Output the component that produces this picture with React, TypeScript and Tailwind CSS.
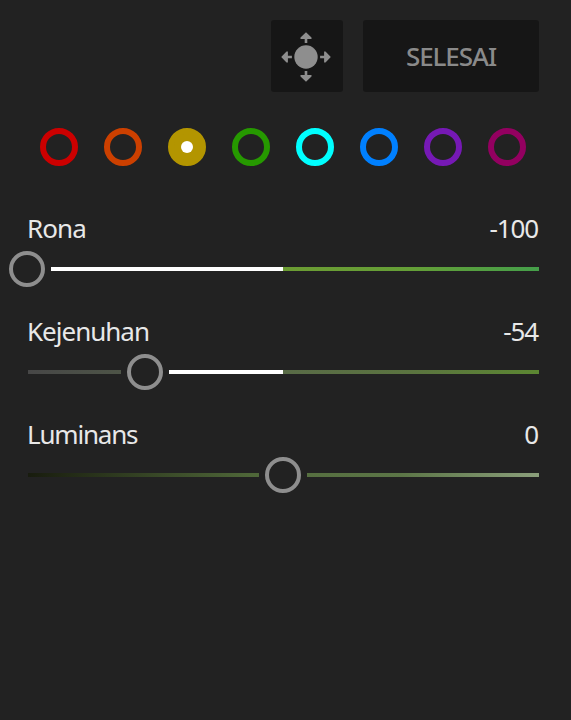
import React from 'react';

interface Swatch {
  name: string;
  ring: string;
  selected?: boolean;
}

interface SliderProps {
  label: string;
  value: number;
  track: string;
  labelSpacing: string;
}

const swatches: Swatch[] = [
  { name: 'red', ring: 'border-[#cc0000]' },
  { name: 'orange', ring: 'border-[#cc4000]' },
  { name: 'yellow', ring: 'border-[#b39500] bg-[#b39500]', selected: true },
  { name: 'green', ring: 'border-[#269900]' },
  { name: 'aqua', ring: 'border-[#00ffff]' },
  { name: 'blue', ring: 'border-[#0080ff]' },
  { name: 'purple', ring: 'border-[#7619b5]' },
  { name: 'magenta', ring: 'border-[#930060]' },
];

const sliders: SliderProps[] = [
  {
    label: 'Rona',
    value: -100,
    track: 'bg-[linear-gradient(to_right,#8c9a2a,#6c9c33_50%,#659f37_75%,#459f4a)]',
    labelSpacing: 'tracking-[-0.9px]',
  },
  {
    label: 'Kejenuhan',
    value: -54,
    track: 'bg-[linear-gradient(to_right,#474747,#596b47_50%,#5b7440_75%,#5c8732)]',
    labelSpacing: 'tracking-[-1px]',
  },
  {
    label: 'Luminans',
    value: 0,
    track: 'bg-[linear-gradient(to_right,#181c0e,#4e6638_43%,#566f40_55%,#5c7647_73%,#8b9f7b)]',
    labelSpacing: 'tracking-[-1.2px]',
  },
];

function TargetIcon() {
  return (
    <svg className="mt-0.5 mr-0.5" width="50" height="50" viewBox="0 0 50 50" fill="#8e8e8e">
      <circle cx="25" cy="25" r="11.7" />
      {[0, 90, 180, 270].map((angle) => (
        <path
          key={angle}
          transform={`rotate(${angle} 25 25)`}
          d="M25 0.2 30.5 5.5V6.9H26.3V10.9H23.7V6.9H19.5V5.5Z"
        />
      ))}
    </svg>
  );
}

function Slider({ label, value, track, labelSpacing }: SliderProps) {
  const position = (value + 100) / 2;

  return (
    <div className="h-[103px]">
      <div className="flex h-10 items-start justify-between text-[26px] leading-[34px] font-[450] text-[#e8e8e8]">
        <span className={labelSpacing}>{label}</span>
        <span className="pr-px tracking-[-1.1px]">{value}</span>
      </div>
      <div className="relative flex h-9 items-center">
        <div className={`ml-px h-1 flex-1 ${track}`} />
        {/* Filled part runs from the thumb to the centre of the track */}
        <div
          className="absolute top-4 right-1/2 h-1 bg-white"
          style={{ left: `${position}%` }}
        />
        <div
          className="absolute top-0 flex h-9 w-12 -translate-x-1/2 justify-center bg-[#222222]"
          style={{ left: `${position}%` }}
        >
          <div className="h-9 w-9 rounded-full border-4 border-[#8e8e8e]" />
        </div>
      </div>
    </div>
  );
}

export default function App() {
  return (
    <div className="h-[720px] w-[571px] overflow-hidden bg-[#222222] pt-5 pr-8 pl-[27px] font-['Noto_Sans',sans-serif]">
      <div className="flex justify-end gap-5">
        <button className="flex h-18 w-18 items-center justify-center rounded-[3px] bg-[#161616]">
          <TargetIcon />
        </button>
        <button className="flex h-18 w-44 items-center justify-center rounded-[3px] bg-[#161616] text-[26px] font-medium tracking-[-1.1px] text-[#8a8a8a]">
          SELESAI
        </button>
      </div>

      <div className="mt-9 flex justify-between pr-[13px] pl-[13px]">
        {swatches.map((swatch) => (
          <button
            key={swatch.name}
            aria-label={swatch.name}
            className={`flex h-[38px] w-[38px] items-center justify-center rounded-full border-6 ${swatch.ring}`}
          >
            {swatch.selected && <span className="h-3 w-3 rounded-full bg-white" />}
          </button>
        ))}
      </div>

      <div className="mt-[45px]">
        {sliders.map((slider) => (
          <Slider key={slider.label} {...slider} />
        ))}
      </div>
    </div>
  );
}
